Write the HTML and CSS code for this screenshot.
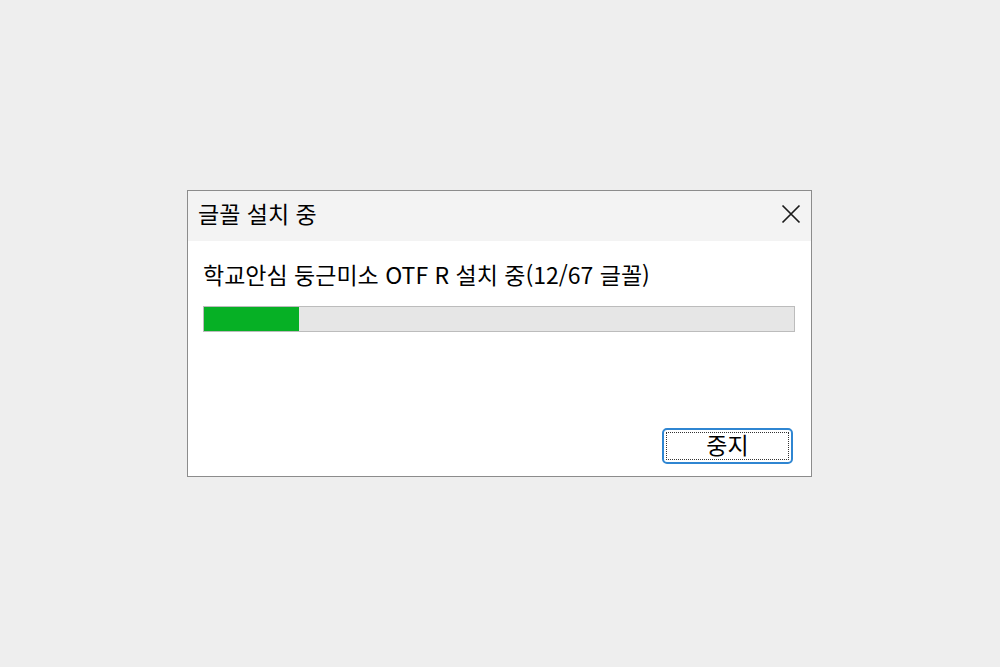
FILE: index.html
```html
<!DOCTYPE html>
<html lang="ko">
<head>
<meta charset="utf-8">
<link rel="stylesheet" href="styles.css">
</head>
<body>
<div class="dialog">
  <div class="titlebar">
    <span class="title">글꼴 설치 중</span>
    <span class="close" aria-label="닫기">
      <svg width="20" height="20" viewBox="0 0 20 20"><path d="M1.5 1.5 L18.5 18.5 M18.5 1.5 L1.5 18.5" stroke="#1a1a1a" stroke-width="1.7" fill="none"/></svg>
    </span>
  </div>
  <div class="content">
    <div class="label">학교안심 둥근미소 OTF R 설치 중(12/67 글꼴)</div>
    <div class="progress"><div class="fill" style="width:16.1%"></div></div>
    <div class="actions">
      <button class="btn"><span class="focus">중지</span></button>
    </div>
  </div>
</div>
</body>
</html>
```
FILE: styles.css
```css
html, body {
  margin: 0;
  padding: 0;
  height: 100%;
}
body {
  background: #eeeeee;
  display: flex;
  align-items: center;
  justify-content: center;
  font-family: "Noto Sans CJK KR", "Noto Sans", sans-serif;
  color: #000000;
}
.dialog {
  width: 623px;
  height: 285px;
  margin-right: 1px;
  border: 1px solid #8c8c8c;
  background: #ffffff;
  display: flex;
  flex-direction: column;
}
.titlebar {
  height: 50px;
  background: #f3f3f3;
  display: flex;
  align-items: center;
  justify-content: space-between;
  padding: 0 10px 0 10px;
}
.title {
  font-size: 23px;
  line-height: 1;
  margin-top: -6px;
}
.close {
  display: flex;
  width: 20px;
  height: 20px;
  margin-top: -5px;
}
.content {
  flex: 1;
  display: flex;
  flex-direction: column;
  padding: 19px 16px 12px 15px;
}
.label {
  font-size: 23px;
  line-height: 28px;
  white-space: nowrap;
}
.progress {
  margin-top: 18px;
  height: 24px;
  border: 1px solid #bcbcbc;
  background: #e6e6e6;
}
.fill {
  height: 100%;
  background: #06b025;
}
.actions {
  margin-top: auto;
  display: flex;
  justify-content: flex-end;
  padding-right: 2px;
}
.btn {
  width: 131px;
  height: 36px;
  border: 2px solid #2f86d2;
  border-radius: 5px;
  background: #ffffff;
  padding: 2px;
  display: flex;
  font-family: inherit;
  cursor: default;
}
.focus {
  flex: 1;
  border: 1px dotted #333333;
  display: flex;
  align-items: center;
  justify-content: center;
  font-size: 23px;
  line-height: 1;
  padding-bottom: 4px;
  color: #000000;
}
```
